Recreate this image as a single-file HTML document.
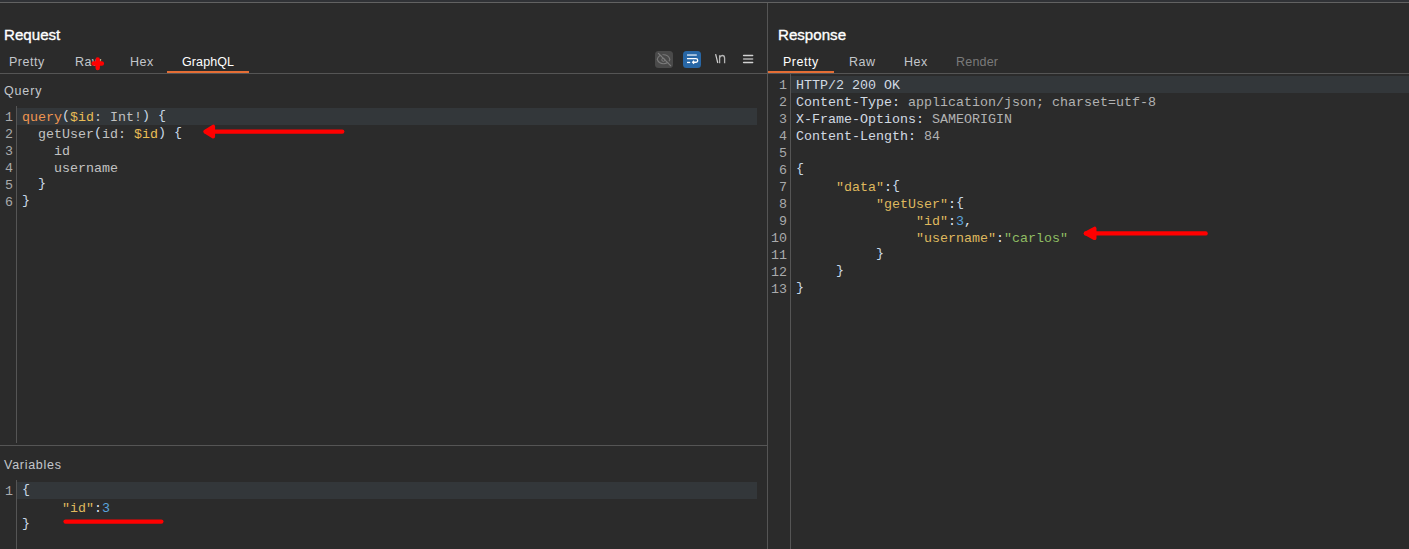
<!DOCTYPE html>
<html><head><meta charset="utf-8">
<style>
*{margin:0;padding:0;box-sizing:border-box}
html,body{width:1409px;height:549px;overflow:hidden;background:#2b2b2b}
body{position:relative;font-family:"Liberation Sans",sans-serif}
.a{position:absolute}
.topbar{left:0;top:0;width:1409px;height:2px;background:#303236}
.topline{left:0;top:2px;width:1409px;height:1px;background:#626262}
.vdiv{left:767px;top:3px;width:1px;height:546px;background:#555}
.hl{height:1px;background:#555}
.title{font-weight:normal;font-size:15.5px;color:#fff;line-height:20px;white-space:nowrap;transform:scaleX(0.975);transform-origin:0 0;-webkit-text-stroke:0.35px #fff}
.tab{font-size:12.5px;color:#c3c7cb;line-height:16px;white-space:nowrap;letter-spacing:0.5px}
.tab.act{color:#fff}
.tab.dis{color:#7a7a7a}
.orange{height:2px;background:#e56e35}
.label{font-size:12.5px;color:#c3c7cb;line-height:16px;white-space:nowrap;letter-spacing:0.5px}
.gut{width:1px;background:#555}
.hi{background:#33373a;height:17px}
.code{font-family:"Liberation Mono",monospace;font-size:13.333px;padding-top:1px;line-height:17px;white-space:pre;color:#c2c2c2}
.ln{font-family:"Liberation Mono",monospace;font-size:13.333px;padding-top:1px;line-height:17px;white-space:pre;color:#a9aaab;text-align:right}
.kw{color:#ef9550}
.var{color:#e9bd56}
.br{color:#c9d9e8;position:relative;top:-2px}
.hn{color:#d2dae3}
.hv{color:#b2b2b2}
.jk{color:#dfb85e}
.jn{color:#5aa3dd}
.js{color:#8fbd63}
.jp{color:#dfe4ea}
</style></head><body>
<div class="a topbar"></div>
<div class="a topline"></div>
<div class="a vdiv"></div>

<!-- LEFT: Request -->
<div class="a title" style="left:4px;top:25.4px">Request</div>
<div class="a tab" style="left:9px;top:54px">Pretty</div>
<div class="a tab" style="left:75px;top:54px">Raw</div>
<div class="a tab" style="left:130px;top:54px">Hex</div>
<div class="a tab act" style="left:182px;top:54px;letter-spacing:0.1px">GraphQL</div>
<div class="a orange" style="left:167px;top:71px;width:82px"></div>
<div class="a hl" style="left:0;top:73px;width:767px"></div>

<div class="a label" style="left:4px;top:83px;letter-spacing:0.85px">Query</div>
<div class="a gut" style="left:16px;top:106px;height:337px"></div>
<div class="a hi" style="left:17px;top:108px;width:740px"></div>
<div class="a ln" style="left:0;top:108px;width:13px">1
2
3
4
5
6</div>
<div class="a code" style="left:22px;top:108px"><span class="kw">query</span><span class="br">(</span><span class="var">$id</span>: Int!<span class="br">)</span> <span class="br">{</span>
  getUser<span class="br">(</span>id: <span class="var">$id</span><span class="br">)</span> <span class="br">{</span>
    id
    username
  <span class="br">}</span>
<span class="br">}</span></div>

<div class="a hl" style="left:0;top:445px;width:767px"></div>
<div class="a label" style="left:4px;top:457px;letter-spacing:0.72px">Variables</div>
<div class="a gut" style="left:16px;top:480px;height:69px"></div>
<div class="a hi" style="left:17px;top:482px;width:740px"></div>
<div class="a ln" style="left:0;top:482px;width:13px">1</div>
<div class="a code" style="left:22px;top:482px"><span class="br">{</span>
     <span class="jk">"id"</span><span class="jp">:</span><span class="jn">3</span>
<span class="br">}</span></div>

<!-- RIGHT: Response -->
<div class="a title" style="left:778px;top:25.4px">Response</div>
<div class="a tab act" style="left:783px;top:54px">Pretty</div>
<div class="a tab" style="left:849px;top:54px">Raw</div>
<div class="a tab" style="left:904px;top:54px">Hex</div>
<div class="a tab dis" style="left:956px;top:54px;letter-spacing:0.2px">Render</div>
<div class="a orange" style="left:768px;top:71px;width:66px"></div>
<div class="a hl" style="left:768px;top:73px;width:641px"></div>

<div class="a gut" style="left:790px;top:74px;height:475px"></div>
<div class="a hi" style="left:791px;top:76px;width:618px"></div>
<div class="a ln" style="left:768px;top:76px;width:19px">1
2
3
4
5
6
7
8
9
10
11
12
13</div>
<div class="a code" style="left:796px;top:76px"><span class="hn">HTTP/2 200 OK</span>
<span class="hn">Content-Type:</span><span class="hv"> application/json; charset=utf-8</span>
<span class="hn">X-Frame-Options:</span><span class="hv"> SAMEORIGIN</span>
<span class="hn">Content-Length:</span><span class="hv"> 84</span>

<span class="br">{</span>
     <span class="jk">"data"</span><span class="jp">:</span><span class="br">{</span>
          <span class="jk">"getUser"</span><span class="jp">:</span><span class="br">{</span>
               <span class="jk">"id"</span><span class="jp">:</span><span class="jn">3</span><span class="jp">,</span>
               <span class="jk">"username"</span><span class="jp">:</span><span class="js">"carlos"</span>
          <span class="br">}</span>
     <span class="br">}</span>
<span class="br">}</span></div>


<!-- toolbar icons -->
<svg class="a" style="left:0;top:0" width="1409" height="549" viewBox="0 0 1409 549">
  <rect x="655" y="51" width="18" height="17" rx="3.5" fill="#4a4a4a"/>
  <path d="M657.2 59.3 C659.2 53.2 667.9 53.2 669.9 59.3 C667.9 65.2 659.2 65.2 657.2 59.3 Z" fill="none" stroke="#7a7a7a" stroke-width="1.1"/>
  <circle cx="663.4" cy="59.8" r="1.6" fill="none" stroke="#7a7a7a" stroke-width="1"/>
  <line x1="659.4" y1="52.4" x2="671.6" y2="64.7" stroke="#4a4a4a" stroke-width="1.3"/>
  <line x1="658.4" y1="53.4" x2="670.6" y2="65.7" stroke="#7c7c7c" stroke-width="1.2" stroke-linecap="round"/>
  <rect x="683" y="51" width="18" height="17" rx="3.5" fill="#2867a6"/>
  <rect x="687" y="54.2" width="9.8" height="1.7" fill="#b3cbe3"/>
  <path d="M687 58.65 H695.9 A1.8 1.8 0 0 1 695.9 62.25 H693" fill="none" stroke="#ffffff" stroke-width="1.3"/>
  <path d="M694.1 60.8 L692.6 62.25 L694.1 63.7" fill="none" stroke="#ffffff" stroke-width="1.2"/>
  <rect x="687" y="61.8" width="3.2" height="1.3" fill="#ffffff"/>
  <line x1="715.6" y1="54.2" x2="717.8" y2="63" stroke="#d0d0d0" stroke-width="1.2"/>
  <path d="M719.6 55.3 V63.2 M719.6 57.8 Q720.4 55.5 722.3 55.5 Q724.6 55.5 724.6 58.2 V63.2" fill="none" stroke="#b4b4b4" stroke-width="1.3"/>
  <line x1="743.6" y1="55.5" x2="752.6" y2="55.5" stroke="#d2d2d2" stroke-width="1.5" stroke-linecap="round"/>
  <line x1="743.6" y1="59" x2="752.6" y2="59" stroke="#b0b0b0" stroke-width="1.5" stroke-linecap="round"/>
  <line x1="743.6" y1="62.5" x2="752.6" y2="62.5" stroke="#d2d2d2" stroke-width="1.5" stroke-linecap="round"/>
  <!-- annotations -->
  <g fill="#ff0000" stroke="#ff0000" stroke-linecap="round" stroke-linejoin="round">
    <line x1="206" y1="131.6" x2="342.2" y2="131.6" stroke-width="4.4"/>
    <path d="M205.2 131.6 L213.2 126.6 L213.2 136.6 Z" stroke-width="3.8"/>
    <line x1="1086" y1="233.4" x2="1205.6" y2="233.4" stroke-width="4.4"/>
    <path d="M1085.6 233.4 L1094.6 228.6 L1094.6 238.2 Z" stroke-width="3.8"/>
    <line x1="65.6" y1="521.6" x2="161.3" y2="521.6" stroke-width="4.4"/>
    <path d="M93.6 63.5 H101.9 M97.7 59.4 V68.1" fill="none" stroke-width="4.4" stroke-linecap="round"/>
  </g>
</svg>
</body></html>
